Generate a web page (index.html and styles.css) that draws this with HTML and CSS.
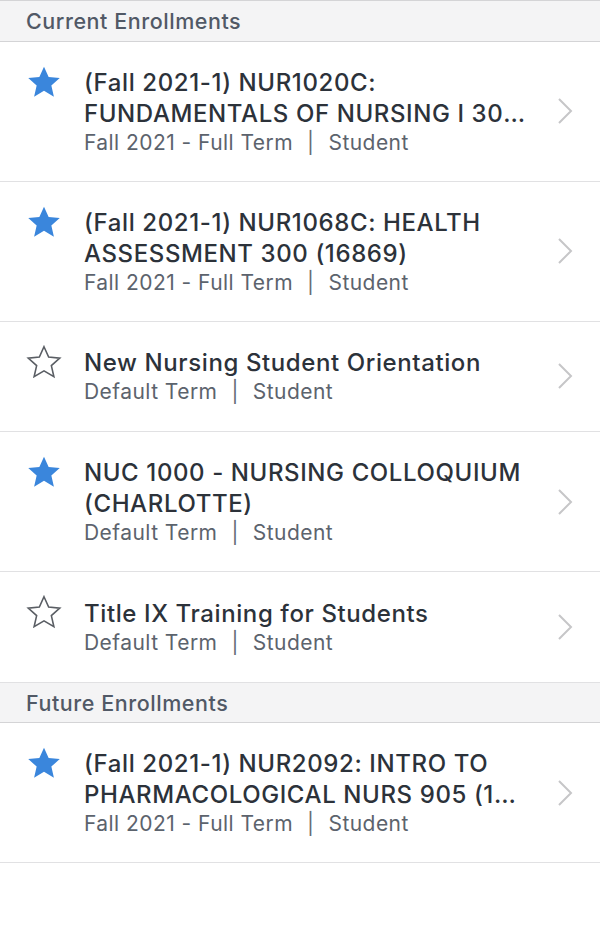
FILE: index.html
```html
<!DOCTYPE html>
<html>
<head>
<meta charset="utf-8">
<link rel="stylesheet" href="styles.css">
</head>
<body>
<div class="list">
  <div class="section-header">Current Enrollments</div>

  <div class="row">
    <svg class="star filled" viewBox="0 0 24 24"><path d="M12 1.8l3.1 6.9 7.4.7-5.6 5 1.7 7.4L12 17.9l-6.6 3.9 1.7-7.4-5.6-5 7.4-.7z"/></svg>
    <div class="text">
      <div class="title"><span class="line">(Fall 2021-1) NUR1020C:</span><span class="line cut">FUNDAMENTALS OF NURSING I 300 (16868)</span></div>
      <div class="sub">Fall 2021 - Full Term<span class="sep">|</span>Student</div>
    </div>
    <svg class="chev" viewBox="0 0 16 28"><path d="M2 2l12 12L2 26"/></svg>
  </div>

  <div class="row">
    <svg class="star filled" viewBox="0 0 24 24"><path d="M12 1.8l3.1 6.9 7.4.7-5.6 5 1.7 7.4L12 17.9l-6.6 3.9 1.7-7.4-5.6-5 7.4-.7z"/></svg>
    <div class="text">
      <div class="title">(Fall 2021-1) NUR1068C: HEALTH ASSESSMENT 300 (16869)</div>
      <div class="sub">Fall 2021 - Full Term<span class="sep">|</span>Student</div>
    </div>
    <svg class="chev" viewBox="0 0 16 28"><path d="M2 2l12 12L2 26"/></svg>
  </div>

  <div class="row">
    <svg class="star outline" viewBox="0 0 24 24"><path d="M12 1.8l3.1 6.9 7.4.7-5.6 5 1.7 7.4L12 17.9l-6.6 3.9 1.7-7.4-5.6-5 7.4-.7z"/></svg>
    <div class="text">
      <div class="title">New Nursing Student Orientation</div>
      <div class="sub">Default Term<span class="sep">|</span>Student</div>
    </div>
    <svg class="chev" viewBox="0 0 16 28"><path d="M2 2l12 12L2 26"/></svg>
  </div>

  <div class="row">
    <svg class="star filled" viewBox="0 0 24 24"><path d="M12 1.8l3.1 6.9 7.4.7-5.6 5 1.7 7.4L12 17.9l-6.6 3.9 1.7-7.4-5.6-5 7.4-.7z"/></svg>
    <div class="text">
      <div class="title">NUC 1000 - NURSING COLLOQUIUM (CHARLOTTE)</div>
      <div class="sub">Default Term<span class="sep">|</span>Student</div>
    </div>
    <svg class="chev" viewBox="0 0 16 28"><path d="M2 2l12 12L2 26"/></svg>
  </div>

  <div class="row">
    <svg class="star outline" viewBox="0 0 24 24"><path d="M12 1.8l3.1 6.9 7.4.7-5.6 5 1.7 7.4L12 17.9l-6.6 3.9 1.7-7.4-5.6-5 7.4-.7z"/></svg>
    <div class="text">
      <div class="title">Title IX Training for Students</div>
      <div class="sub">Default Term<span class="sep">|</span>Student</div>
    </div>
    <svg class="chev" viewBox="0 0 16 28"><path d="M2 2l12 12L2 26"/></svg>
  </div>

  <div class="section-header">Future Enrollments</div>

  <div class="row">
    <svg class="star filled" viewBox="0 0 24 24"><path d="M12 1.8l3.1 6.9 7.4.7-5.6 5 1.7 7.4L12 17.9l-6.6 3.9 1.7-7.4-5.6-5 7.4-.7z"/></svg>
    <div class="text">
      <div class="title"><span class="line">(Fall 2021-1) NUR2092: INTRO TO</span><span class="line cut">PHARMACOLOGICAL NURS 905 (16870)</span></div>
      <div class="sub">Fall 2021 - Full Term<span class="sep">|</span>Student</div>
    </div>
    <svg class="chev" viewBox="0 0 16 28"><path d="M2 2l12 12L2 26"/></svg>
  </div>
</div>
</body>
</html>
```

FILE: styles.css
```css
html, body {
  margin: 0;
  padding: 0;
  background: #ffffff;
}
body {
  font-family: Inter, "Noto Sans", "Liberation Sans", sans-serif;
  -webkit-font-smoothing: antialiased;
}
.list {
  border-top: 1px solid #d4d4d6;
}
.section-header {
  height: 40.5px;
  box-sizing: border-box;
  background: #f4f4f5;
  border-bottom: 1px solid #d4d4d6;
  padding-left: 26px;
  font-size: 21.5px;
  font-weight: 500;
  line-height: 40px;
  letter-spacing: 0.55px;
  color: #515966;
}
.row {
  display: flex;
  align-items: center;
  box-sizing: border-box;
  min-height: 110.5px;
  border-bottom: 1px solid #e1e1e3;
  padding: 25px 0 25px 0;
}
.star {
  flex: 0 0 auto;
  width: 36px;
  height: 36px;
  margin-left: 26px;
  margin-right: 22px;
  align-self: flex-start;
  margin-top: -3px;
}
.star.filled path {
  fill: #3a86dc;
}
.star.outline path {
  fill: none;
  stroke: #5a5e64;
  stroke-width: 1.05;
  stroke-linejoin: miter;
}
.text {
  flex: 1 1 auto;
  min-width: 0;
}
.title {
  font-size: 24px;
  font-weight: 500;
  line-height: 31px;
  color: #2c323a;
  letter-spacing: 0.6px;
}
.line {
  display: block;
  white-space: nowrap;
}
.line.cut {
  overflow: hidden;
  text-overflow: ellipsis;
}
.sub {
  font-size: 21px;
  line-height: 27px;
  color: #5c636d;
  letter-spacing: 0.45px;
}
.sep {
  display: inline-block;
  margin: 0 14px;
  color: #666c75;
}
.chev {
  flex: 0 0 auto;
  width: 16px;
  height: 28px;
  margin-left: 26px;
  margin-right: 27px;
}
.chev path {
  fill: none;
  stroke: #c6c6c8;
  stroke-width: 2;
}
```
